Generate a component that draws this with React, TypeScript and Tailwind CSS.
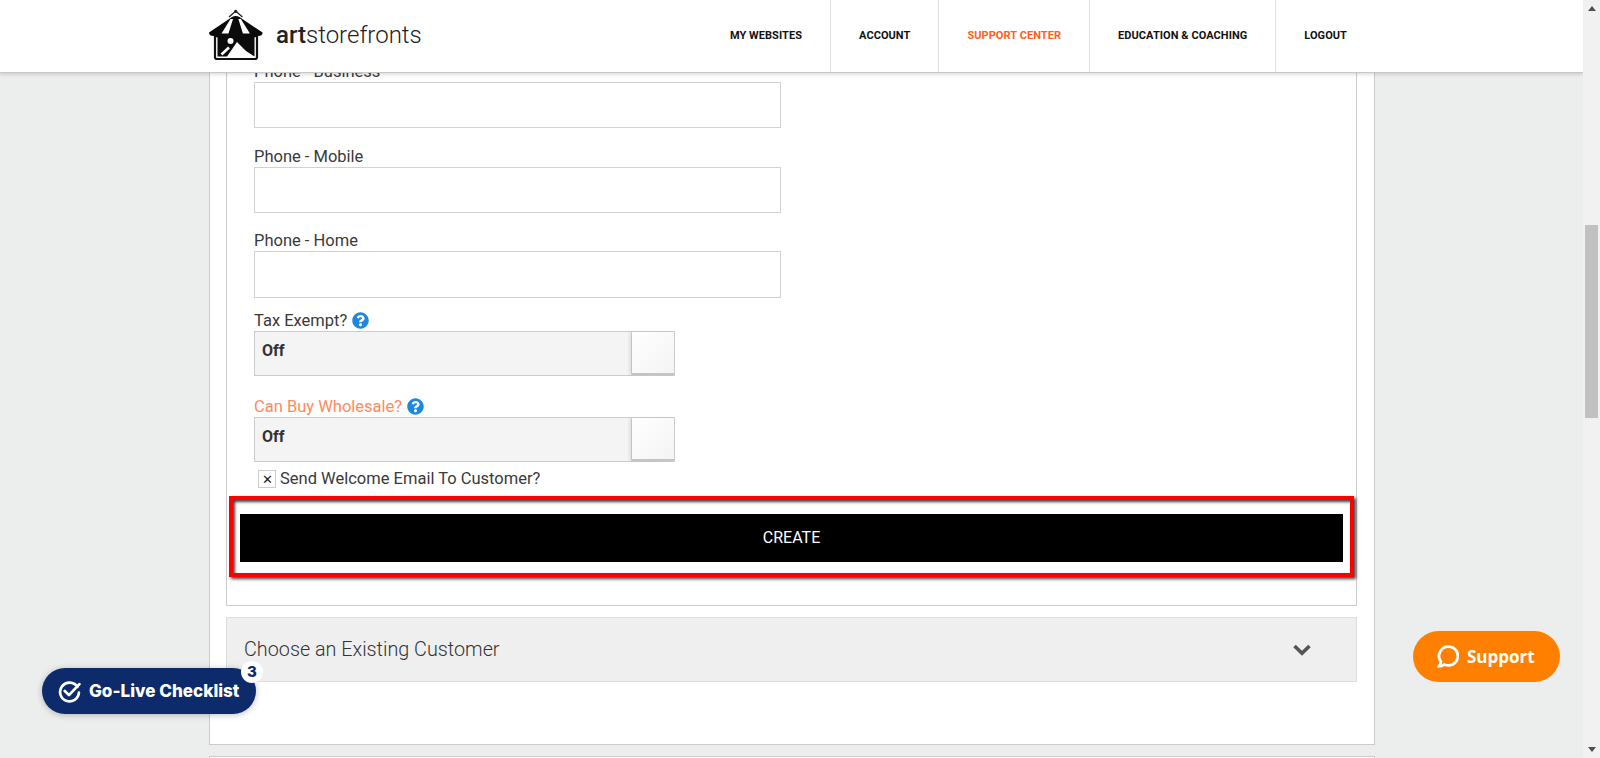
import { FaQuestionCircle } from "react-icons/fa";

const navItems = [
  { label: "My Websites" },
  { label: "Account" },
  { label: "Support Center", active: true },
  { label: "Education & Coaching" },
  { label: "Logout" },
];

function Logo() {
  return (
    <svg width="56" height="54" viewBox="0 0 56 54" className="shrink-0">
      <path d="M21 8 L27.7 2 L34.4 8" fill="none" stroke="#222" strokeWidth="1.3" />
      <circle cx="27.7" cy="2.4" r="1.6" fill="#222" />
      <rect x="7" y="25" width="42" height="25" rx="2" fill="#fff" stroke="#111" strokeWidth="2.2" />
      <path d="M9.5 27 H46.5 V47.5 L38 42 L29 33 L19 47.5 H9.5 Z" fill="#0b0b0b" />
      <circle cx="22.5" cy="32" r="3" fill="#fff" />
      <path d="M13.5 45.5 L21 38.5" stroke="#fff" strokeWidth="2.6" />
      <path d="M1 23.5 L24 8 Q27.7 6 31.4 8 L54.5 23.5 Q55 27 50 27 Q45.5 30 41 27 Q36 30 32 27 Q27.7 30 23.4 27 Q19 30 14.5 27 Q10 30 6 27 Q1 27 1 23.5 Z" fill="#0b0b0b" />
      <path d="M22.5 10 L13.5 24.5 L20.5 24.5 L25 10 Z" fill="#fff" />
      <path d="M32.9 10 L41.9 24.5 L34.9 24.5 L30.4 10 Z" fill="#fff" />
    </svg>
  );
}

function Field({ label, height, gap }: { label: string; height: string; gap: string }) {
  return (
    <div className={`w-[527px] ${gap}`}>
      <div className="h-[20px] text-[16.5px] leading-[20px] text-[#3a3a3a]">{label}</div>
      <div className={`border border-[#d2d2d2] bg-white ${height}`} />
    </div>
  );
}

function Toggle({ label, accent }: { label: string; accent?: boolean }) {
  return (
    <div className="w-[421px]">
      <div className={`flex h-[20px] items-center gap-[5px] text-[16.5px] leading-[20px] ${accent ? "text-[#ff8a5c]" : "text-[#3a3a3a]"}`}>
        {label}
        <FaQuestionCircle className="-mt-[1px] text-[17px] text-[#1f87dc]" />
      </div>
      <div className="flex h-[45px] border border-[#ccc] bg-[#f4f4f4]">
        <div className="flex-1 px-[7px] pt-[9px] text-[16px] font-bold leading-[20px] text-[#333]">Off</div>
        <div className="w-[43px] rounded-[1px] border-b-2 border-l border-[#c4c4c4] bg-gradient-to-br from-white to-[#f4f4f4] shadow-[-2px_0_3px_rgba(0,0,0,0.08)]" />
      </div>
    </div>
  );
}

export default function App() {
  return (
    <div className="flex h-[758px] overflow-hidden bg-[#eceeed] font-['Roboto',sans-serif]">
      <div className="flex min-w-0 flex-1 flex-col">
        <header className="relative z-10 flex h-[73px] shrink-0 items-stretch justify-between border-b border-[#c8c8c8] bg-white pl-[208px] pr-[208px] shadow-[0_1px_4px_rgba(0,0,0,0.18)]">
          <div className="flex items-center gap-[12px]">
            <Logo />
            <span className="mt-[-3px] text-[24px] font-light text-[#222]">
              <span className="font-medium">art</span>storefronts
            </span>
          </div>
          <nav className="flex">
            {navItems.map((item, i) => (
              <a
                key={item.label}
                className={`flex items-center px-[28px] text-[11px] font-bold uppercase tracking-[0.06px] ${i < navItems.length - 1 ? "border-r border-[#e2e2e2]" : ""} ${item.active ? "text-[#ff5f1f]" : "text-[#111]"}`}
              >
                {item.label}
              </a>
            ))}
          </nav>
        </header>

        <main className="ml-[209px] w-[1166px]">
          <div className="-mt-[61px] h-[733px] border border-[#ccc] bg-white pl-[16px] pr-[17px] pt-[12px]">
            <div className="h-[581px] border border-[#ccc] px-[27px] pt-[36px]">
              <Field label="Phone - Business" height="h-[46px]" gap="mb-[19px]" />
              <Field label="Phone - Mobile" height="h-[46px]" gap="mb-[18px]" />
              <Field label="Phone - Home" height="h-[47px]" gap="mb-[13px]" />
              <Toggle label="Tax Exempt?" />
              <div className="mt-[21px]">
                <Toggle label="Can Buy Wholesale?" accent />
              </div>
              <div className="ml-[4px] mt-[8px] flex items-center gap-[4px] text-[16.5px] text-[#3a3a3a]">
                <span className="flex h-[18px] w-[18px] items-center justify-center border border-[#ccc] text-[13px] leading-none text-[#222]">✕</span>
                <span className="leading-[18px]">Send Welcome Email To Customer?</span>
              </div>
              <div className="-ml-[25px] mt-[8px] h-[81px] w-[1125px] border-4 border-[#ff0000] px-[7px] pb-[11px] pt-[14px] shadow-[2px_2px_3px_rgba(0,0,0,0.75),inset_2px_2px_3px_rgba(0,0,0,0.75)]">
                <div className="flex h-[48px] items-center justify-center bg-black text-[16px] text-white">CREATE</div>
              </div>
            </div>
            <div className="mt-[11px] flex h-[65px] items-center justify-between border border-[#ddd] bg-[#efefef] pl-[17px] pr-[45px]">
              <span className="text-[19.8px] font-light text-[#333]">Choose an Existing Customer</span>
              <svg width="18" height="12" viewBox="0 0 18 12" fill="none" stroke="#555" strokeWidth="3.6">
                <path d="M1.5 2 L9 9.2 L16.5 2" />
              </svg>
            </div>
          </div>
          <div className="mt-[11px] h-[20px] border border-[#ccc] bg-white" />
        </main>
      </div>

      <div className="relative z-20 flex w-[17px] shrink-0 flex-col items-center bg-[#f1f1f1]">
        <div className="mt-[6px] h-0 w-0 border-x-[4px] border-b-[5px] border-x-transparent border-b-[#505050]" />
        <div className="mt-[214px] h-[193px] w-[13px] bg-[#c1c1c1]" />
        <div className="mt-auto mb-[6px] h-0 w-0 border-x-[4px] border-t-[5px] border-x-transparent border-t-[#505050]" />
      </div>

      <button className="absolute left-[42px] top-[668px] z-30 flex h-[46px] w-[214px] items-center gap-[8px] rounded-full bg-[#0d2b6b] pl-[16px] font-['Inter',sans-serif] text-[17.1px] font-extrabold text-white shadow-[0_1px_6px_rgba(0,0,0,0.25)]">
        <svg width="23" height="23" viewBox="0 0 22 22" fill="none" stroke="#fff" strokeWidth="2.6" strokeLinecap="round" strokeLinejoin="round">
          <path d="M18.5 6.5 A9 9 0 1 0 20 12" />
          <path d="M6.5 10.5 L10.5 14.5 L20.5 4" />
        </svg>
        Go-Live Checklist
        <span className="absolute right-[-7px] top-[-7px] flex h-[22px] w-[22px] items-center justify-center rounded-full bg-white text-[15px] font-extrabold text-[#0d2b6b]">3</span>
      </button>

      <button className="absolute left-[1413px] top-[631px] z-30 flex h-[51px] w-[147px] items-center gap-[8px] rounded-full bg-[#ff8000] pl-[24px] font-['Open_Sans',sans-serif] text-[17px] font-bold text-white">
        <svg width="22" height="23" viewBox="0 0 21 22" fill="none" stroke="#fff" strokeWidth="2.6" strokeLinejoin="round">
          <path d="M11 1.5 A9 9 0 1 1 7 18.6 Q5 20.5 1.5 20.5 Q3.5 18.5 3.8 16 A9 9 0 0 1 11 1.5 Z" />
        </svg>
        Support
      </button>
    </div>
  );
}
